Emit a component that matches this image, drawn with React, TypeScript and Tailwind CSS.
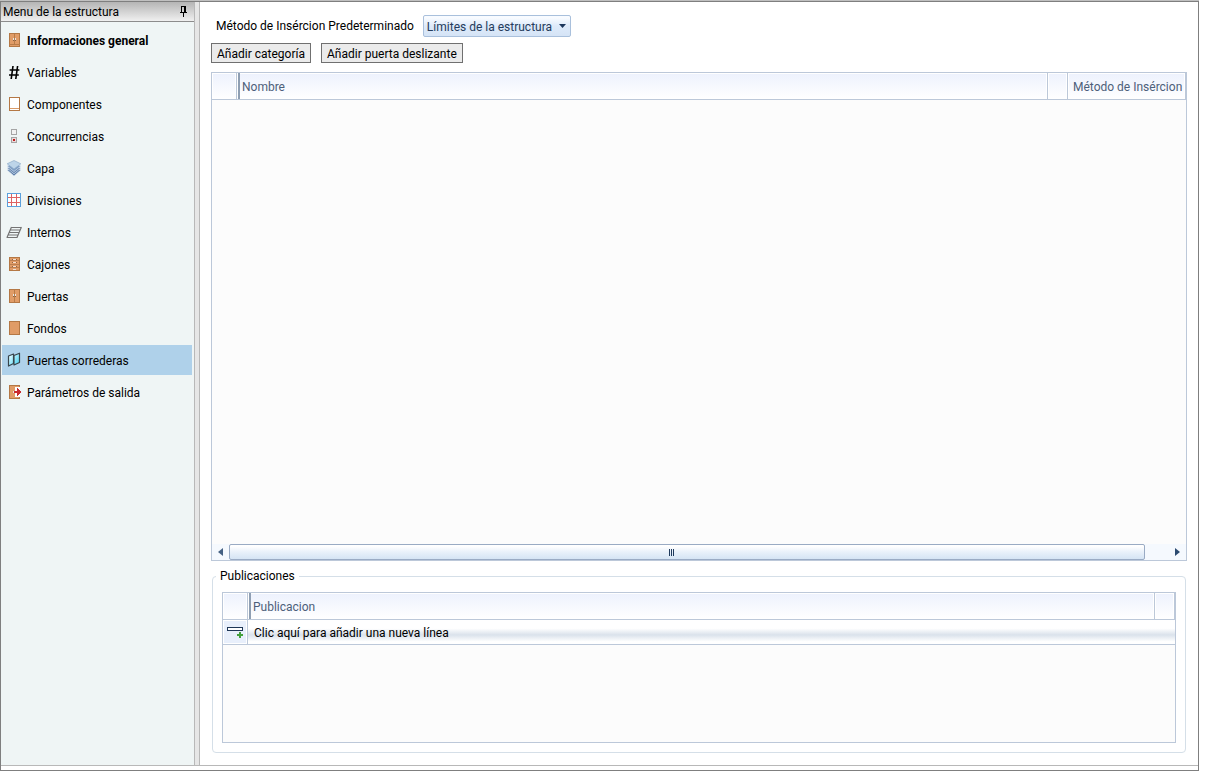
import React from 'react';

type IconProps = { children: React.ReactNode };

function Glyph({ children }: IconProps) {
  return (
    <svg width="16" height="16" viewBox="0 0 16 16" aria-hidden="true" className="shrink-0" shapeRendering="crispEdges">
      {children}
    </svg>
  );
}

function Panel({ children, fill = '#e09c67' }: { children?: React.ReactNode; fill?: string }) {
  return (
    <Glyph>
      <rect x="3.5" y="1.5" width="10" height="13" fill={fill} stroke="#b47845" />
      {children}
    </Glyph>
  );
}

function Cabinet() {
  return (
    <Panel>
      <path d="M3 12.5h11M8.5 2v10" stroke="#b87c49" />
      <path d="M7 6h1v2h-1zM9 6h1v2h-1z" fill="#e8e6e4" />
      <path d="M7 8h1v1h-1zM9 8h1v1h-1z" fill="#826247" />
    </Panel>
  );
}

function Doors() {
  return (
    <Panel>
      <path d="M8.5 2v12" stroke="#b87c49" />
      <path d="M7 6h1v2h-1zM9 6h1v2h-1z" fill="#e8e6e4" />
      <path d="M7 8h1v1h-1zM9 8h1v1h-1z" fill="#826247" />
    </Panel>
  );
}

function Hash() {
  return (
    <svg width="16" height="16" viewBox="0 0 16 16" aria-hidden="true" className="shrink-0">
      <path d="M7 2 5.2 15M11.6 2 9.8 15M3.6 6h9.8M3 11h9.8" stroke="#000" strokeWidth="1.6" fill="none" />
    </svg>
  );
}

function Component() {
  return (
    <Panel fill="#fff">
      <path d="M4 12.5h9" stroke="#d99a68" />
    </Panel>
  );
}

function Concurrence() {
  return (
    <Glyph>
      <rect x="5.5" y="1.5" width="5" height="5" fill="#f2f2f2" stroke="#a5a5a5" />
      <rect x="5.5" y="9.5" width="5" height="5" fill="#e9dada" stroke="#a5a5a5" />
      <path d="M7 11h2v2H7z" fill="#c01818" />
    </Glyph>
  );
}

function Layers() {
  return (
    <svg width="16" height="16" viewBox="0 0 16 16" aria-hidden="true" className="shrink-0">
      <g stroke="#dfeaf5" strokeWidth="0.6">
        <path d="m8 6.8 6.8 3.200-6.800 6-6.800-6z" fill="#5f80aa" />
        <path d="m8 5 6.800 3-6.800 5.800L1.200 8z" fill="#6c8cb5" />
        <path d="m8 3 6.800 3L8 11.500 1.200 6z" fill="#7d9dc3" />
      </g>
      <path d="m8 0.500 6.800 3.300L8 9 1.200 3.800z" fill="#bdd5e9" stroke="#8facc9" strokeWidth="0.700" />
    </svg>
  );
}

function Divisions() {
  return (
    <Glyph>
      <rect x="1.500" y="1.500" width="13" height="13" fill="#fff" stroke="#5ba0dc" />
      <path d="M5.500 2v12M10.500 2v12M2 5.500h12M2 10.500h12" stroke="#df6262" />
    </Glyph>
  );
}

function Shelves() {
  return (
    <svg width="16" height="16" viewBox="0 0 16 16" aria-hidden="true" className="shrink-0">
      <path d="M5 3.500H15.500M4 6H14.500M3 8.500H13.500M2 11H12.500M.5 13.500H11.500M5.500 3 1 13.500M15.500 3 11 13.500" stroke="#747474" strokeWidth="1.200" fill="none" />
    </svg>
  );
}

function Drawers() {
  return (
    <Panel>
      <path d="M4 4.500h9M4 8.500h9M4 11.500h9" stroke="#bb7f50" />
      <path d="M7 3h3v1H7zM7 6h3v1H7zM7 10h3v1H7zM7 13h3v1H7z" fill="#f2dfd0" />
      <path d="M6 3h1v1H6zM10 3h1v1h-1zM6 6h1v1H6zM10 6h1v1h-1zM6 10h1v1H6zM10 10h1v1h-1z" fill="#95613d" />
    </Panel>
  );
}

function Sliding() {
  return (
    <svg width="16" height="16" viewBox="0 0 16 16" aria-hidden="true" className="shrink-0">
      <defs>
        <linearGradient id="glass" x1="0" y1="0" x2="1" y2="1">
          <stop offset="0.2" stopColor="#d5f7ff" />
          <stop offset="1" stopColor="#35cdf0" />
        </linearGradient>
      </defs>
      <path d="M2.500 4 7.500 2v9.500l-5 2.500zM8 3.500 13.500 1.200V10.500L8 13z" fill="url(#glass)" stroke="#38444b" strokeWidth="1.200" strokeLinejoin="round" />
    </svg>
  );
}

function Output() {
  return (
    <Panel>
      <path d="M9 3h5v10H9z" fill="#fff" />
      <path d="M7 7h1v2H7z" fill="#e8e6e4" />
      <path d="M8 7h3V4h1v1h1v1h1v1h1v2h-1v1h-1v1h-1v1h-1V9H8z" fill="#c92b2f" />
    </Panel>
  );
}

const menu = [
  { label: 'Informaciones general', icon: <Cabinet />, bold: true },
  { label: 'Variables', icon: <Hash /> },
  { label: 'Componentes', icon: <Component /> },
  { label: 'Concurrencias', icon: <Concurrence /> },
  { label: 'Capa', icon: <Layers /> },
  { label: 'Divisiones', icon: <Divisions /> },
  { label: 'Internos', icon: <Shelves /> },
  { label: 'Cajones', icon: <Drawers /> },
  { label: 'Puertas', icon: <Doors /> },
  { label: 'Fondos', icon: <Panel /> },
  { label: 'Puertas correderas', icon: <Sliding />, active: true },
  { label: 'Parámetros de salida', icon: <Output /> },
];

const head =
  'border-b border-[#bcc8d9] bg-linear-to-b from-[#edf2fd] to-white p-0 text-left font-normal text-[#4d607a] shadow-[inset_0_0_0_1px_#fff]';

function MainHeading({ children }: { children: React.ReactNode }) {
  return (
    <th scope="col" className={`${head} pl-px`}>
      <div className="flex h-[26px] items-center border-l-2 border-[#8f9fb3] pt-px pl-0.5">{children}</div>
    </th>
  );
}

function Sidebar() {
  return (
    <aside className="flex w-[194px] shrink-0 flex-col border-r border-[#b8b8b8] bg-[#eff5f5]">
      <header className="flex h-5 items-center justify-between border-b border-[#8c8c8c] bg-linear-to-b from-[#b5b5b5] to-[#f0f0f0] pr-1.5 pl-0.5">
        <h1 className="pt-px">Menu de la estructura</h1>
        <button type="button" aria-label="Fijar panel">
          <svg width="9" height="11" viewBox="0 0 9 11" shapeRendering="crispEdges" aria-hidden="true">
            <path d="M2.500 0v6M2 .5h5M1 6.500h7M4.500 7v4M6 0v6" stroke="#000" fill="none" />
            <path d="M5 0h2v6H5z" fill="#000" />
          </svg>
        </button>
      </header>
      <nav className="flex flex-col gap-0.5 py-[3px] pr-0.5 pl-px">
        {menu.map((item) => (
          <a
            key={item.label}
            href="#"
            aria-current={item.active ? 'page' : undefined}
            className={`flex h-[30px] items-center gap-1 pl-1 ${item.active ? 'bg-[#afd1ea]' : ''} ${item.bold ? 'font-bold' : ''}`}
          >
            {item.icon}
            <span className="pt-px pl-px">{item.label}</span>
          </a>
        ))}
      </nav>
    </aside>
  );
}

function ScrollBar() {
  return (
    <div className="flex h-4 bg-[#f5f9fe]">
      <button type="button" aria-label="Desplazar a la izquierda" className="flex w-[17px] items-center justify-center">
        <svg width="5" height="8" viewBox="0 0 5 8" aria-hidden="true">
          <path d="M5 0v8L0 4z" fill="#456183" />
        </svg>
      </button>
      <div className="flex-1 pr-6">
        <div className="flex h-4 items-center justify-center gap-px rounded-xs border border-[#9aabc4] bg-linear-to-b from-white from-10% via-[#e9f1fa] via-50% to-[#d5e4f4] pr-8">
          <span className="h-[7px] w-px bg-[#1f3a5c]" />
          <span className="h-[7px] w-px bg-[#1f3a5c]" />
          <span className="h-[7px] w-px bg-[#1f3a5c]" />
        </div>
      </div>
      <button type="button" aria-label="Desplazar a la derecha" className="flex w-[17px] items-center justify-center">
        <svg width="5" height="8" viewBox="0 0 5 8" aria-hidden="true">
          <path d="M0 0v8l5-4z" fill="#2c4a70" />
        </svg>
      </button>
    </div>
  );
}

function Toolbar() {
  return (
    <div className="flex flex-col gap-1.5 pt-[13px]">
      <div className="flex items-center gap-[9px] pl-[5px]">
        <label htmlFor="metodo">Método de Insércion Predeterminado</label>
        <div className="relative">
          <select
            id="metodo"
            className="block h-[22px] w-[148px] appearance-none rounded-xs border border-[#a9c0dc] bg-linear-to-b from-[#f8fbff] from-10% via-[#deeafa] via-50% to-[#d5e4f6] pt-px pl-[3px] text-[#253c5c]"
          >
            <option>Límites de la estructura</option>
          </select>
          <svg width="7" height="4" viewBox="0 0 7 4" aria-hidden="true" className="pointer-events-none absolute top-[9px] right-[5px]">
            <path d="M0 0h7L3.500 4z" fill="#1c365c" />
          </svg>
        </div>
      </div>
      <div className="flex gap-2.5">
        <button type="button" className="h-5 border border-[#707070] bg-[#ebebeb] px-[5px] pt-px">Añadir categoría</button>
        <button type="button" className="h-5 border border-[#707070] bg-[#ebebeb] px-[5px] pt-px">Añadir puerta deslizante</button>
      </div>
    </div>
  );
}

function DoorGrid() {
  return (
    <section aria-label="Puertas correderas" className="mt-[9px] flex flex-1 flex-col border border-[#bcc8d9] bg-[#fcfcfc]">
      <table className="w-full table-fixed border-separate border-spacing-0">
        <colgroup>
          <col className="w-[25px]" />
          <col />
          <col className="w-[21px]" />
          <col className="w-[118px]" />
        </colgroup>
        <thead>
          <tr>
            <th className={`${head} border-r`} />
            <MainHeading>Nombre</MainHeading>
            <th className={`${head} border-x`} />
            <th scope="col" className={`${head} border-r`}>
              <div className="pt-px pl-[5px] whitespace-nowrap">Método de Insércion</div>
            </th>
          </tr>
        </thead>
      </table>
      <div className="flex-1" />
      <ScrollBar />
    </section>
  );
}

function Publications() {
  return (
    <fieldset className="mx-px mt-[7px] mb-3 rounded-sm border border-[#d5dfe8] px-[9px] pb-[9px]">
      <legend className="-ml-1.5 px-1 leading-4">Publicaciones</legend>
      <div className="mt-2 h-[151px] border border-[#bcc8d9] bg-[#fcfcfc]">
        <table className="w-full table-fixed border-separate border-spacing-0">
          <colgroup>
            <col className="w-[25px]" />
            <col />
            <col className="w-[21px]" />
          </colgroup>
          <thead>
            <tr>
              <th className={`${head} border-r`} />
              <MainHeading>Publicacion</MainHeading>
              <th className={`${head} border-x`} />
            </tr>
          </thead>
          <tbody>
            <tr>
              <td className="border-r border-b border-[#bcc8d9] bg-[#e8effb] p-0 shadow-[inset_0_0_0_1px_#fff]">
                <svg width="18" height="14" viewBox="0 0 18 14" aria-hidden="true" shapeRendering="crispEdges" className="mx-auto">
                  <path d="M1.500 2.500h15v3h-15z" fill="#fff" stroke="#1e3656" />
                  <path d="M13 7h2v2h2v2h-2v2h-2v-2h-2V9h2z" fill="#43a03c" />
                </svg>
              </td>
              <td colSpan={2} className="border-b border-[#bcc8d9] p-0">
                <button
                  type="button"
                  className="block h-6 w-full bg-linear-to-b from-white from-35% via-[#dae2eb] via-62% to-white to-90% pt-px pl-1.5 text-left"
                >
                  Clic aquí para añadir una nueva línea
                </button>
              </td>
            </tr>
          </tbody>
        </table>
      </div>
    </fieldset>
  );
}

export default function App() {
  return (
    <div className="flex min-h-screen flex-col bg-white pr-2 pb-1 font-['Roboto','Noto_Sans',sans-serif] text-xs text-black">
      <div className="flex flex-1 flex-col border-t border-[#c0c0c0]">
        <div className="flex flex-1 flex-col border border-[#7f7f7f] pb-1">
          <div className="flex flex-1 border-b border-[#b8b8b8]">
            <Sidebar />
            <div className="w-1 shrink-0 bg-[#e6e6e6]" />
            <main className="flex min-w-0 flex-1 flex-col border-l border-[#b8b8b8] px-[11px]">
              <Toolbar />
              <DoorGrid />
              <Publications />
            </main>
          </div>
        </div>
      </div>
    </div>
  );
}
